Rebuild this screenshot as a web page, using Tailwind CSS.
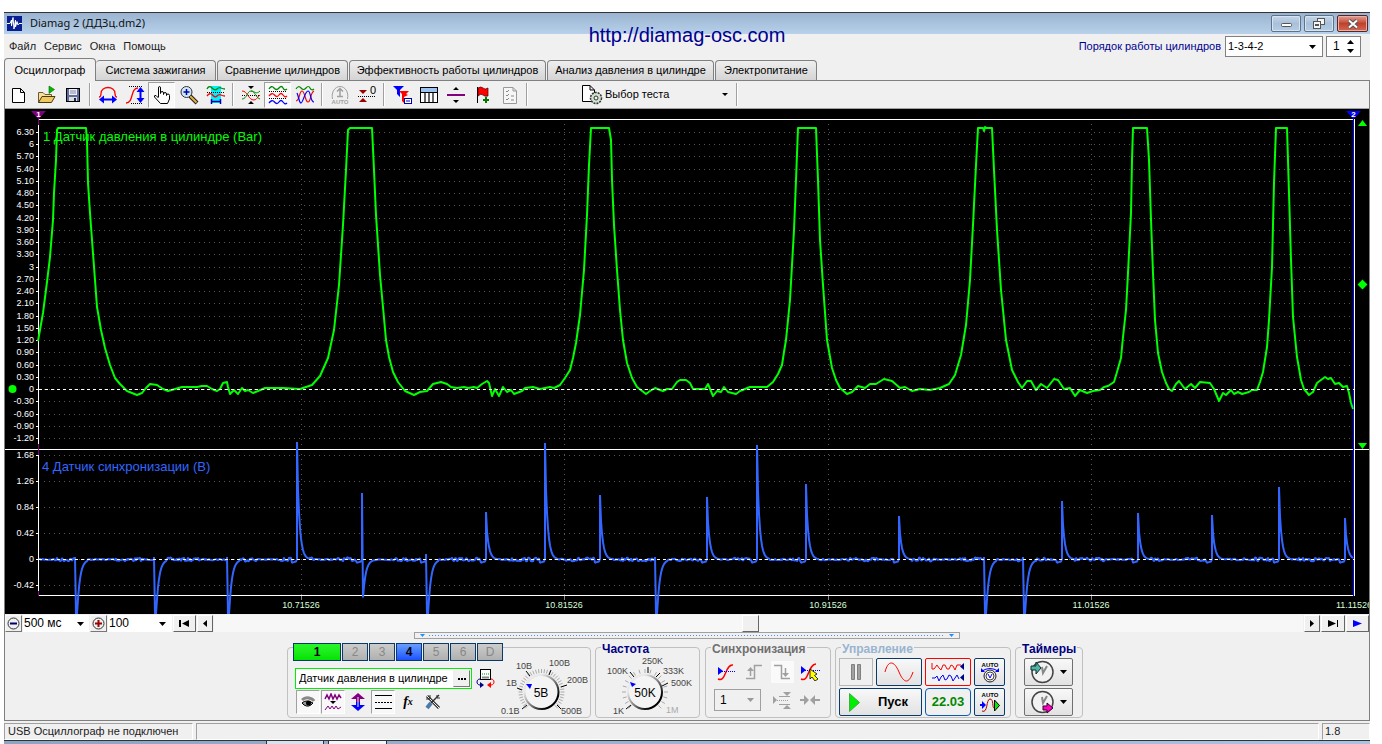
<!DOCTYPE html>
<html lang="ru">
<head>
<meta charset="utf-8">
<title>Diamag 2</title>
<script src="https://cdn.jsdelivr.net/npm/@tailwindcss/browser@4"></script>
</head>
<body class="bg-white font-['Liberation_Sans',Arial,sans-serif] text-xs text-black">
<svg width="0" height="0" class="absolute" aria-hidden="true">
  <defs>
    <linearGradient id="ring" x1="0" y1="0" x2="1" y2="1"><stop offset=".25" stop-color="#e8e8e8"/><stop offset=".55" stop-color="#777"/><stop offset=".8" stop-color="#000"/></linearGradient>
  </defs>
</svg>
<div class="pt-3 pl-1 pr-3">
<main class="relative border-t border-[#333] bg-[#f0f0f0]">
  <!-- title bar -->
  <header class="flex h-[21px] items-center bg-gradient-to-b from-[#99b4d1] to-[#b9d1ea] pl-[3px] pr-[2px]">
    <svg width="15" height="15" viewBox="0 0 15 15"><rect width="15" height="15" fill="#0a1f8f"/><path d="M0 7.500H3L4.500 4V10L6 1.500L7 13L8.500 4V11L10 5.500L11 9L12 7.500H15" fill="none" stroke="#fff"/></svg>
    <h1 class="ml-2 grow text-[11px] font-['Noto_Sans',sans-serif] text-[#111]">Diamag 2 (ДДЗц.dm2)</h1>
    <div class="flex gap-[3px]">
      <button aria-label="Свернуть" class="flex h-[17px] w-[30px] items-center justify-center rounded-xs border border-[#5e7288] bg-gradient-to-b from-[#c5d6ea] via-[#a9c0da] to-[#b5cce4] shadow-[inset_0_0_0_1px_#d5e3f2]"><svg width="11" height="9"><rect x=".5" y="4.500" width="10" height="3" rx="1" fill="#fff" stroke="#555"/></svg></button>
      <button aria-label="Восстановить" class="flex h-[17px] w-[30px] items-center justify-center rounded-xs border border-[#5e7288] bg-gradient-to-b from-[#c5d6ea] via-[#a9c0da] to-[#b5cce4] shadow-[inset_0_0_0_1px_#d5e3f2]"><svg width="12" height="11" fill="#f5f5f5" stroke="#555"><rect x="4.500" y=".5" width="7" height="6"/><rect x=".5" y="3.500" width="7" height="7"/><rect x="2.500" y="6.500" width="3" height="1"/></svg></button>
      <button aria-label="Закрыть" class="flex h-[17px] w-[31px] items-center justify-center rounded-xs border border-[#5c2420] bg-gradient-to-b from-[#e0a094] via-[#c0402c] to-[#cf6a54] shadow-[inset_0_0_0_1px_#e8b0a6]"><svg width="12" height="10"><path d="M2 1.500L10 8.500M10 1.500L2 8.500" stroke="#555" stroke-width="4"/><path d="M2 1.500L10 8.500M10 1.500L2 8.500" stroke="#fff" stroke-width="2"/></svg></button>
    </div>
  </header>
  <a href="http://diamag-osc.com" class="absolute left-1/2 top-[10px] -translate-x-1/2 text-xl leading-6 text-[#000090]">http://diamag-osc.com</a>
  <!-- menu -->
  <div class="flex h-[24px] items-center pl-[5px] pr-[9px]">
    <nav class="flex grow gap-2 text-[11px] text-[#222]">
      <button>Файл</button><button>Сервис</button><button>Окна</button><button>Помощь</button>
    </nav>
    <label for="order" class="mr-1 text-[11px] text-[#000090]">Порядок работы цилиндров</label>
    <div class="relative mr-[3px] h-[21px] w-[98px] border border-[#808080] bg-white">
      <select id="order" class="h-full w-full appearance-none pl-[2px] text-[11px] outline-none"><option>1-3-4-2</option></select>
      <svg class="pointer-events-none absolute right-[6px] top-2" width="7" height="4"><path d="M0 0H7L3.500 4Z"/></svg>
    </div>
    <div class="flex h-[21px] w-[35px] items-center border border-[#808080] bg-white pl-[6px] pr-[6px]">
      <input aria-label="Цилиндр" value="1" class="w-2 grow text-left text-xs outline-none">
      <svg width="7" height="13"><path d="M0 4H7L3.500 0ZM0 9H7L3.500 13Z"/></svg>
    </div>
  </div>
  <!-- tabs -->
  <div role="tablist" class="flex h-[22px] items-end text-[11px]">
    <button role="tab" aria-selected="true" class="relative z-10 -mb-px h-[23px] w-[92px] rounded-t border border-b-0 border-[#808080] bg-[#f0f0f0]">Осциллограф</button>
    <button role="tab" class="h-[20px] w-[120px] rounded-t border border-b-0 border-l-0 border-[#808080] bg-gradient-to-b from-[#efefef] to-[#d4d4d4]">Система зажигания</button>
    <button role="tab" class="ml-px h-[20px] w-[131px] rounded-t border border-b-0 border-[#808080] bg-gradient-to-b from-[#efefef] to-[#d4d4d4]">Сравнение цилиндров</button>
    <button role="tab" class="ml-px h-[20px] w-[197px] rounded-t border border-b-0 border-[#808080] bg-gradient-to-b from-[#efefef] to-[#d4d4d4]">Эффективность работы цилиндров</button>
    <button role="tab" class="ml-px h-[20px] w-[167px] rounded-t border border-b-0 border-[#808080] bg-gradient-to-b from-[#efefef] to-[#d4d4d4]">Анализ давления в цилиндре</button>
    <button role="tab" class="ml-px h-[20px] w-[102px] rounded-t border border-b-0 border-[#808080] bg-gradient-to-b from-[#efefef] to-[#d4d4d4]">Электропитание</button>
  </div>
  <section class="border border-[#808080]">
    <!-- toolbar -->
    <div class="flex h-[28px] items-center border-b border-[#a0a0a0] shadow-[0_1px_0_#fff]">
      <button aria-label="Новый" class="flex h-[26px] w-[27px] items-center justify-center"><svg width="20" height="20"><path d="M3.500 3.500H11.500L15.500 7.500V17.500H3.500ZM11.500 3.500V7.500H15.500" fill="#fff" stroke="#000"/></svg></button>
      <button aria-label="Открыть" class="flex h-[26px] w-[27px] items-center justify-center"><svg width="20" height="20"><path d="M2.500 17.500V7.500H7L9 9.500H15.500V11" fill="#f5dfa0" stroke="#6b5a2a"/><path d="M2.500 17.500L6 11.500H19L15.500 17.500Z" fill="#f0c860" stroke="#4a3a10"/><path d="M13 1V8.500L18.500 4.500Z" fill="#0b0" stroke="#060" stroke-width=".6"/></svg></button>
      <button aria-label="Сохранить" class="flex h-[26px] w-[27px] items-center justify-center"><svg width="20" height="20"><rect x="3.500" y="3.500" width="13" height="13" fill="#5e6f9e" stroke="#000"/><rect x="6" y="4" width="8" height="6" fill="#eef"/><path d="M7 6H13M7 8H13" stroke="#889"/><rect x="6" y="12" width="8" height="4" fill="#ddd"/><rect x="11" y="13" width="2" height="3" fill="#224"/></svg></button>
      <span class="mx-[3px] h-[23px] w-[2px] border-l border-[#a0a0a0] bg-white"></span>
      <button aria-label="По ширине" class="flex h-[26px] w-[27px] items-center justify-center"><svg width="20" height="20"><path d="M1 12C1 12 3 12 3 8.500C3 4.500 6.500 2.500 10 2.500S17 4.500 17 8.500C17 12 19 12 19 12" fill="none" stroke="#f00" stroke-width="1.300"/><path d="M4 14.500H16" stroke="#00f" stroke-width="2"/><path d="M1 14.500L6 10.500V18.500ZM19 14.500L14 10.500V18.500Z" fill="#00f"/></svg></button>
      <button aria-label="По высоте" class="flex h-[26px] w-[27px] items-center justify-center"><svg width="20" height="20"><path d="M4 1.500H18M6 18.500H18" stroke="#000" stroke-dasharray="1 1"/><path d="M1 18C9 18 5 3 13 3" fill="none" stroke="#f00" stroke-width="1.300"/><path d="M15.500 5V15" stroke="#00f" stroke-width="2"/><path d="M15.500 2L11.500 7H19.500ZM15.500 18L11.500 13H19.500Z" fill="#00f"/></svg></button>
      <button aria-label="Рука" aria-pressed="true" class="flex h-[26px] w-[27px] items-center justify-center border border-[#a0a0a0] border-b-white border-r-white bg-[#f9f9f9]"><svg width="20" height="20"><path d="M6.500 12V3Q6.500 1.500 7.500 1.500T8.500 3V8.500Q8.500 6.500 10 6.500T11.500 8V9.500Q11.500 7.500 13 7.500T14.500 9V10.500Q14.500 9 16 9T17.500 10.500V14L15.500 18.500H8.500L2.500 12Q2 10 4 10.500L6.500 13" fill="#fff" stroke="#000"/></svg></button>
      <button aria-label="Лупа" class="flex h-[26px] w-[27px] items-center justify-center"><svg width="20" height="20"><path d="M11 11L18 18" stroke="#222" stroke-width="4"/><path d="M11 11L17.500 17.500" stroke="#e8b040" stroke-width="2"/><circle cx="7.500" cy="7" r="5.500" fill="#cfe6f5" stroke="#333"/><path d="M4.500 7H10.500M7.500 4V10" stroke="#00a" stroke-width="1.500"/></svg></button>
      <button aria-label="Выделение" class="flex h-[26px] w-[27px] items-center justify-center"><svg width="20" height="20"><rect x="5" y="1" width="10" height="17" fill="#00f0ff"/><path d="M1 4Q3 0 6 3T11 4T15 3T19 4" fill="none" stroke="#080" stroke-width="1.300"/><path d="M1 7.500H19" stroke="#000" stroke-dasharray="1 1"/><path d="M1 11Q4 7 6.500 10T11 11T15 10T19 11" fill="none" stroke="#f00" stroke-width="1.300"/><path d="M5.500 14V19M14.500 14V19M6 16.500H14" stroke="#00a" stroke-width="1.500"/></svg></button>
      <span class="mx-[3px] h-[23px] w-[2px] border-l border-[#a0a0a0] bg-white"></span>
      <button aria-label="Наложить" class="flex h-[26px] w-[27px] items-center justify-center"><svg width="20" height="20"><path d="M1 10.500H19" stroke="#000" stroke-dasharray="1 1"/><path d="M1 6C7 6 7 15 13 15C16 15 16 12 19 10" fill="none" stroke="#f00"/><path d="M1 14C6 14 6 6 10 6S15 13 19 14M10 6C14 6 15 10 19 6" fill="none" stroke="#080"/><path d="M7 1H13L10 4ZM7 19H13L10 16Z"/></svg></button>
      <button aria-label="Разнести" aria-pressed="true" class="flex h-[26px] w-[27px] items-center justify-center border border-[#a0a0a0] border-b-white border-r-white bg-[#f9f9f9]"><svg width="20" height="20"><path d="M1 4Q3.500 0 6 3T11 3T15 3T19 4" fill="none" stroke="#080" stroke-width="1.300"/><path d="M1 6.500H19M1 13.500H19" stroke="#000" stroke-dasharray="1 1"/><path d="M1 11Q4 7 6.500 10T11 10T15 10T19 11" fill="none" stroke="#f00" stroke-width="1.300"/><path d="M1 18Q4 14 6.500 17T11 17T15 17T19 18" fill="none" stroke="#00f" stroke-width="1.300"/></svg></button>
      <button aria-label="Смешать" class="flex h-[26px] w-[27px] items-center justify-center"><svg width="20" height="20" fill="none" stroke-width="1.200"><path d="M1 4Q3.500 0 6 3T11 3T15 3T19 4" stroke="#080"/><path d="M1 16C5 16 4 6 7 6S10 17 13 17S15 8 19 6" stroke="#f00"/><path d="M2 8C4 12 4 18 6 18S10 6 13 6S15 17 19 17" stroke="#00f"/></svg></button>
      <span class="mx-[3px] h-[23px] w-[2px] border-l border-[#a0a0a0] bg-white"></span>
      <button aria-label="Авто" class="flex h-[26px] w-[27px] items-center justify-center"><svg width="20" height="20"><path d="M2.500 14C1 7 5 1.500 10 1.500S19 7 17.500 14" fill="none" stroke="#a0a0a0"/><path d="M10 4V12M7 6.500L10 3.500L13 6.500M7 11.500H13" stroke="#a0a0a0" fill="none" stroke-width="1.500"/><text x="10" y="19" text-anchor="middle" font-size="6" font-weight="bold" fill="#a0a0a0">AUTO</text></svg></button>
      <button aria-label="Ноль" class="flex h-[26px] w-[27px] items-center justify-center"><svg width="22" height="20"><path d="M3 5H11L7 9ZM3 17H11L7 13Z" fill="#900"/><path d="M2 11.500H20" stroke="#000" stroke-dasharray="1 1"/><text x="14" y="9" font-size="11">0</text></svg></button>
      <span class="mx-[3px] h-[23px] w-[2px] border-l border-[#a0a0a0] bg-white"></span>
      <button aria-label="Фильтр" class="flex h-[26px] w-[27px] items-center justify-center"><svg width="20" height="20"><path d="M1 1H12L8 5V12L5 9V5Z" fill="#00f"/><path d="M7 6H17L14 9L16 10L12 12V18L10 16V9Z" fill="#f00"/><rect x="12.500" y="13.500" width="7" height="5" fill="#fff" stroke="#00a"/><path d="M14 16H18" stroke="#00a"/></svg></button>
      <button aria-label="Таблица" class="flex h-[26px] w-[27px] items-center justify-center"><svg width="20" height="20"><rect x="1.500" y="2.500" width="17" height="15" fill="#fff" stroke="#000"/><rect x="2" y="3" width="16" height="4" fill="#9cc4ee"/><path d="M2 7.500H18M6 7V17M10 7V17M14 7V17" stroke="#000" stroke-width="1.200"/></svg></button>
      <button aria-label="Разделитель" class="flex h-[26px] w-[27px] items-center justify-center"><svg width="20" height="20"><path d="M7 5H13L10 2ZM7 15H13L10 18Z"/><rect x="1" y="9" width="18" height="2" fill="#800080"/></svg></button>
      <button aria-label="Метка" class="flex h-[26px] w-[27px] items-center justify-center"><svg width="20" height="20"><path d="M4.500 2V18" stroke="#000"/><path d="M5 3Q8 1 10 3T15 3V11Q12 12 10 10T5 11Z" fill="#f00" stroke="#400" stroke-width=".7"/><path d="M13 12V18M10 15H16" stroke="#070" stroke-width="2"/></svg></button>
      <button aria-label="Отчёт" class="flex h-[26px] w-[27px] items-center justify-center"><svg width="20" height="20"><path d="M3.500 2.500H13L16.500 6V18.500H3.500ZM13 2.500V6H16.500" fill="#f6f6f6" stroke="#999"/><path d="M6 6L7 7L9 5M6 10L7 11L9 9M6 14L7 15L9 13M11 11H14M11 15H14" fill="none" stroke="#888"/></svg></button>
      <span class="mx-[3px] h-[23px] w-[2px] border-l border-[#a0a0a0] bg-white"></span>
      <button class="ml-[50px] flex h-[26px] w-[152px] items-center text-left text-[11px]"><svg width="22" height="22"><path d="M1.500 1.500H9L13.500 6V17.500H1.500ZM9 1.500V6H13.500" fill="#fff" stroke="#000"/><circle cx="15" cy="14" r="5.500" fill="#cfe3cf" stroke="#333" stroke-width="1.500" stroke-dasharray="2 1"/><circle cx="15" cy="14" r="2" fill="#f0f0f0" stroke="#333"/></svg><span class="ml-[2px] grow">Выбор теста</span><svg class="mr-[5px]" width="6" height="3"><path d="M0 0H6L3 3Z"/></svg></button>
      <span class="mx-[3px] h-[23px] w-[2px] border-l border-[#a0a0a0] bg-white"></span>
    </div>
    <!-- oscillogram -->
    <div class="bg-black">
      <svg id="scope" class="block h-auto w-full" viewBox="5 109 1364 505" role="img" aria-label="Осциллограмма" font-size="9" fill="#fff">
        <rect x="5" y="109" width="1364" height="505" fill="#000"/>
        <g id="grid" stroke="#555" shape-rendering="crispEdges"></g>
        <g id="labels" text-anchor="end"></g>
        <g shape-rendering="crispEdges">
          <rect x="38" y="119" width="1315" height="1"/><rect x="38" y="119" width="1" height="477"/><rect x="5" y="449" width="1364" height="1"/><rect x="38" y="595" width="1316" height="1"/><rect x="1354" y="119" width="1" height="477"/>
          <rect x="1353" y="114" width="1" height="482" fill="#00f"/>
          <rect x="38" y="114" width="1" height="11" fill="#800080"/><rect x="38" y="444" width="1" height="11" fill="#800080"/><rect x="38" y="591" width="1" height="5" fill="#800080"/>
        </g>
        <path d="M31 111H46L38.500 119Z" fill="#800080"/><path d="M1346 111H1361L1353.500 119Z" fill="#00f"/>
        <text x="38.500" y="117" text-anchor="middle" font-size="8" font-weight="bold">1</text><text x="1353.500" y="117" text-anchor="middle" font-size="8" font-weight="bold">2</text>
        <path d="M1358 126H1367L1362.500 120ZM1362.500 279.500L1367.500 284.500L1362.500 289.500L1357.500 284.500ZM1358 443H1367L1362.500 449Z" fill="#0f0"/>
        <circle cx="12.500" cy="389" r="4" fill="#0f0"/>
        <path id="blue" fill="none" stroke="#36f" stroke-width="2" stroke-linejoin="bevel"/>
        <path fill="none" stroke="#0f0" stroke-width="2" stroke-linejoin="round" d="M38 341L43 313L47 282L50 257L53 220L54 193L56 160L57 130L58 128H86L87 140L88 183L90 213L92 240L95 280L97 307L101 330L105 348L110 365L115 378L120 384L127 391L132 393L137 395L142 393L146 388L150 384L157 385L163 389L168 391L175 389L182 387H197L202 386H207L212 389L217 391L220 389L223 383L227 382L228 387L230 394L234 390L238 394L242 388L245 391L248 390L253 393L258 391L265 388L283 388L300 389L312 385L320 376L328 358L334 330L339 285L343 225L346 170L348 130L350 128H372L374 170L376 215L380 275L384 318L386 340L389 357L393 372L398 382L405 391L414 395L420 392L427 391L433 384L441 382L447 384L451 387L457 388L464 387L468 388L474 387L477 388L482 384L487 381L489 383L492 396L495 389L499 396L503 387L507 392L511 390L514 394L522 391L525 388L533 387L540 389L550 387L554 388L560 385L565 378L570 370L573 358L576 343L580 315L584 270L587 215L589 165L591 128H609L611 140L612 180L614 225L617 270L620 310L623 340L627 363L632 378L637 387L646 394L650 391L655 388L663 391L667 389H672L677 382L680 380H686L690 383L693 389H705L708 384L713 396L717 391L721 392L724 387L728 392L736 394L740 391L745 389L750 387H767L773 382L778 374L782 365L784 352L786 340L790 300L794 230L796 180L798 128H816L818 180L820 240L823 285L827 340L832 368L836 380L840 388L847 394L852 392L858 386L865 388L870 384L876 384L884 379L892 381L900 388L905 387L912 391L920 389L930 390L940 388L949 384L955 375L961 355L966 325L970 280L973 225L976 165L978 128H983L984 131L985 127L986 128H992L994 170L997 230L1001 290L1006 340L1012 370L1018 382L1022 388L1027 381L1031 381L1036 390L1041 384L1047 388L1054 379L1058 380L1064 389L1070 388L1075 396L1080 390L1087 393L1093 391L1100 390L1104 387L1108 386L1114 382L1117 372L1121 358L1123 337L1126 310L1128 273L1131 213L1132 160L1133 128H1147L1149 160L1151 220L1153 273L1155 320L1158 353L1162 372L1166 383L1169 389L1172 391L1176 384L1179 381L1185 389L1191 384L1195 388L1200 382L1210 383L1214 389L1219 401L1223 393L1226 395L1231 390L1234 394L1238 392L1242 394L1249 392L1252 390H1257L1260 382L1263 372L1267 347L1269 320L1272 267L1274 183L1276 128H1287L1289 193L1291 260L1293 317L1297 357L1301 380L1304 389L1309 395L1313 392L1317 383L1325 377L1328 379L1331 378L1335 384L1339 383L1343 387L1347 386L1349 393L1351 403L1353 409"/>
        <g stroke="#fff" stroke-dasharray="3 3" shape-rendering="crispEdges"><path d="M39 389.500H1354M39 559.500H1354"/></g>
        <text x="43" y="141" font-size="13" fill="#0f0">1 Датчик давления в цилиндре (Bar)</text>
        <text x="42" y="471" font-size="13" fill="#36f">4 Датчик синхронизации (В)</text>
        <g text-anchor="middle" fill="#d8ffd8"><text x="301" y="608">10.71526</text><text x="564" y="608">10.81526</text><text x="828" y="608">10.91526</text><text x="1091" y="608">11.01526</text><text x="1354" y="608">11.11526</text></g>
      </svg>
    </div>
    <!-- time scale and scroll bar -->
    <div class="flex h-[18px] items-center gap-px text-[11px]">
      <button aria-label="Уменьшить" class="flex h-[17px] w-[17px] items-center justify-center border border-[#f8f8f8] border-b-[#777] border-r-[#777]"><svg width="13" height="13"><circle cx="6.500" cy="6.500" r="5.500" fill="#f0f0f0" stroke="#333"/><path d="M3 6.500H10" stroke="#006" stroke-width="2"/></svg></button>
      <div class="relative h-[17px] w-[66px] bg-white"><select aria-label="Развёртка" class="h-full w-full appearance-none pl-px text-xs leading-4"><option>500 мс</option></select><svg class="pointer-events-none absolute right-[5px] top-[7px]" width="7" height="4"><path d="M0 0H7L3.500 4Z"/></svg></div>
      <button aria-label="Увеличить" class="flex h-[17px] w-[17px] items-center justify-center border border-[#f8f8f8] border-b-[#777] border-r-[#777]"><svg width="13" height="13"><circle cx="6.500" cy="6.500" r="5.500" fill="#f0f0f0" stroke="#333"/><path d="M3 6.500H10M6.500 3V10" stroke="#900" stroke-width="2"/></svg></button>
      <div class="relative h-[17px] w-[64px] bg-white"><select aria-label="Масштаб" class="h-full w-full appearance-none pl-px text-xs leading-4"><option>100</option></select><svg class="pointer-events-none absolute right-[6px] top-[7px]" width="7" height="4"><path d="M0 0H7L3.500 4Z"/></svg></div>
      <button aria-label="В начало" class="flex h-[17px] w-[23px] items-center justify-center border border-white border-b-[#666] border-r-[#666]"><svg width="11" height="7"><path d="M0 0H2V7H0ZM10 0V7L3 3.500Z"/></svg></button>
      <button aria-label="Назад" class="flex h-[17px] w-[16px] items-center justify-center border border-white border-b-[#666] border-r-[#666]"><svg width="4" height="7"><path d="M4 0V7L0 3.500Z"/></svg></button>
      <input type="range" aria-label="Прокрутка" min="0" max="1000" value="493" class="h-[17px] min-w-0 grow appearance-none bg-[#f7f7f7] [&::-webkit-slider-thumb]:h-[17px] [&::-webkit-slider-thumb]:w-[17px] [&::-webkit-slider-thumb]:appearance-none [&::-webkit-slider-thumb]:border [&::-webkit-slider-thumb]:border-white [&::-webkit-slider-thumb]:border-r-[#666] [&::-webkit-slider-thumb]:border-b-[#666] [&::-webkit-slider-thumb]:bg-[#f0f0f0]">
      <button aria-label="Вперёд" class="flex h-[17px] w-[16px] items-center justify-center border border-white border-b-[#666] border-r-[#666]"><svg width="4" height="7"><path d="M0 0V7L4 3.500Z"/></svg></button>
      <button aria-label="В конец" class="flex h-[17px] w-[24px] items-center justify-center border border-white border-b-[#666] border-r-[#666]"><svg width="11" height="7"><path d="M9 0H10V7H9ZM0 0V7L8 3.500Z"/></svg></button>
      <button aria-label="Воспроизвести" class="flex h-[17px] w-[23px] items-center justify-center border border-white border-b-[#666] border-r-[#666]"><svg width="9" height="7"><path d="M0 0V7L9 3.500Z" fill="#00f"/></svg></button>
    </div>
    <!-- splitter -->
    <button aria-label="Свернуть панель" class="mx-auto flex h-[7px] w-2/5 items-center gap-1 border border-[#a0a0a0] px-[5px]"><svg width="5" height="3"><path d="M0 0H5L2.500 3Z" fill="#1e90ff"/></svg><span class="h-px grow bg-[repeating-linear-gradient(90deg,#4a90e8_0_1px,transparent_1px_3px)]"></span><svg width="5" height="3"><path d="M0 0H5L2.500 3Z" fill="#1e90ff"/></svg></button>
    <!-- control panels -->
    <div class="flex h-[81px] justify-center gap-1 pr-1 pt-1">
      <div role="group" aria-label="Каналы" class="relative flex h-[75px] w-[304px]">
        <div class="pointer-events-none absolute inset-x-0 bottom-0 top-[4px] rounded border border-[#c0c0c0]"></div>
        <div class="relative flex flex-col pl-[6px]">
          <div class="flex gap-px bg-[#f0f0f0] text-center text-xs text-[#888]">
            <button class="h-[18px] w-[48px] border border-[#0a3a6a] bg-gradient-to-b from-[#2af52a] to-[#00e400] font-bold text-black">1</button>
            <button class="h-[18px] w-[26px] border border-[#0a3a6a] bg-gradient-to-b from-[#ccc] to-[#b0b0b0]">2</button>
            <button class="h-[18px] w-[26px] border border-[#0a3a6a] bg-gradient-to-b from-[#ccc] to-[#b0b0b0]">3</button>
            <button class="h-[18px] w-[26px] border border-[#0a3a6a] bg-gradient-to-b from-[#6a9cff] to-[#1f50ff] font-bold text-black">4</button>
            <button class="h-[18px] w-[26px] border border-[#0a3a6a] bg-gradient-to-b from-[#ccc] to-[#b0b0b0]">5</button>
            <button class="h-[18px] w-[26px] border border-[#0a3a6a] bg-gradient-to-b from-[#ccc] to-[#b0b0b0]">6</button>
            <button class="h-[18px] w-[26px] border border-[#0a3a6a] bg-gradient-to-b from-[#ccc] to-[#b0b0b0]">D</button>
          </div>
          <div class="mt-[7px] flex items-center pl-[2px]">
            <div class="flex h-[21px] w-[177px] items-center border border-[#0e0] bg-white">
              <input aria-label="Датчик" value="Датчик давления в цилиндре" class="min-w-0 grow pl-[3px] text-[11px] outline-none">
              <button aria-label="Выбрать датчик" class="mr-px flex h-[17px] w-[17px] items-center justify-center border border-[#eee] border-b-[#777] border-r-[#777] bg-[#f0f0f0]"><svg width="8" height="2"><path d="M0 0H2V2H0ZM3 0H5V2H3ZM6 0H8V2H6Z"/></svg></button>
            </div>
            <button aria-label="Поменять" class="ml-1"><svg width="19" height="19"><rect x="4.500" y=".5" width="10" height="10" fill="#fff" stroke="#000"/><path d="M6 5H13" stroke="#080" stroke-dasharray="1 1"/><path d="M6 8.500H13" stroke="#888" stroke-width="2"/><path d="M4 10C0 10 0 16 4 16" fill="none" stroke="#008"/><path d="M4 13V19L8 16Z" fill="#008"/><path d="M15 10C19 10 19 16 15 16" fill="none" stroke="#f00"/><path d="M15 13V19L11 16Z" fill="#f00"/></svg></button>
          </div>
          <div class="mt-px flex gap-px pl-[3px]">
            <button aria-label="Показать" aria-pressed="true" class="flex h-[24px] w-[24px] items-center justify-center border border-[#a0a0a0] border-b-white border-r-white bg-[#f8f8f8]"><svg width="14" height="12"><path d="M1 4Q4 1 8 2T13 5" fill="none" stroke="#888" stroke-width="3"/><path d="M1 7Q5 3 12 7Q8 12 3 9Z" fill="#999" stroke="#000"/><circle cx="7.500" cy="7" r="2.500"/></svg></button>
            <button aria-label="Инверсия" aria-pressed="true" class="flex h-[24px] w-[24px] items-center justify-center border border-[#a0a0a0] border-b-white border-r-white bg-[#f8f8f8]"><svg width="18" height="18" fill="none" stroke="#800080"><path d="M1 6L3 2L5 6L7 1L9 6L11 2L13 6L15 2L17 5" stroke-width="1.500"/><path d="M1 17L4 13L6 16L8 13L10 16L12 13L14 16L17 14" /><path d="M6 8H12L9 11Z" fill="#000" stroke="none"/></svg></button>
            <button aria-label="Сдвиг" class="flex h-[24px] w-[24px] items-center justify-center"><svg width="16" height="18"><path d="M8 0L15 6H10V9H6V6H1Z" fill="#800080"/><path d="M8 18L15 12H10V9H6V12H1Z" fill="#00f"/><path d="M8 4V14" stroke="#f0f0f0"/></svg></button>
            <button aria-label="Линии" aria-pressed="true" class="flex h-[24px] w-[24px] items-center justify-center border border-[#a0a0a0] border-b-white border-r-white bg-[#f8f8f8]"><svg width="17" height="14" stroke="#000"><path d="M0 .5H17M0 13.500H17"/><path d="M0 7.500H17" stroke-dasharray="2 1"/></svg></button>
            <button aria-label="Функция" class="flex h-[24px] w-[24px] items-center justify-center font-['Liberation_Serif',serif] text-sm font-bold italic">f<span class="text-[10px]">x</span></button>
            <button aria-label="Настройка" class="flex h-[24px] w-[24px] items-center justify-center"><svg width="16" height="16"><path d="M2 2L14 14" stroke="#333" stroke-width="3"/><path d="M2 2L14 14" stroke="#eee"/><path d="M14 1L6 9" stroke="#333" stroke-width="1.500"/><path d="M6 9L2 14" stroke="#4a7aaa" stroke-width="4"/><path d="M1 5L5 5L5 1M12 1V4H15" fill="none" stroke="#333"/></svg></button>
          </div>
        </div>
        <svg class="absolute bottom-0 right-0" width="92" height="65" viewBox="499 653 92 65" font-size="9" fill="#444">
          <g class="ticks" data-cx="541.5" data-cy="692" data-n="36"></g>
          <circle cx="541.500" cy="692" r="17" fill="#f4f4f4" stroke="url(#ring)" stroke-width="2"/>
          <path d="M526 684H532L530 689Z" fill="#00f"/>
          <path d="M517 688L522 690M526 671L530 676M551 670L549 675M567 685L561 687M522 709L527 705M557 705L561 709" stroke="#000"/>
          <text x="516" y="669">10В</text><text x="549" y="666">100В</text><text x="567" y="683">200В</text><text x="561" y="714">500В</text><text x="501" y="714">0.1В</text><text x="506" y="686">1В</text>
          <text x="541" y="697" font-size="12" text-anchor="middle" fill="#000">5В</text>
        </svg>
      </div>
      <div role="group" aria-label="Частота" class="relative h-[75px] w-[105px]">
        <div class="pointer-events-none absolute inset-x-0 bottom-0 top-[4px] rounded border border-[#c0c0c0]"></div>
        <h2 class="absolute left-[6px] top-0 bg-[#f0f0f0] px-px text-xs leading-[13px] font-bold text-[#000080]">Частота</h2>
        <svg class="absolute inset-x-0 bottom-0" width="105" height="65" viewBox="595 653 105 65" font-size="9" fill="#444">
          <g class="ticks" data-cx="645" data-cy="692" data-n="18"></g>
          <circle cx="645" cy="692" r="17" fill="#f4f4f4" stroke="url(#ring)" stroke-width="2"/>
          <path d="M630 682L636 684L632 687Z" fill="#00f"/>
          <path d="M630 672L634 677M648 667V673M660 673L656 677M668 683L662 686M626 709L631 705" stroke="#000"/>
          <text x="607" y="674">100K</text><text x="642" y="664">250K</text><text x="663" y="674">333K</text><text x="671" y="686">500K</text><text x="613" y="714">1K</text><text x="666" y="713" fill="#aaa">1M</text>
          <text x="645" y="697" font-size="12" text-anchor="middle" fill="#000">50K</text>
        </svg>
      </div>
      <div role="group" aria-label="Синхронизация" class="relative ml-px h-[75px] w-[126px] px-[9px] pt-[17px]">
        <div class="pointer-events-none absolute inset-x-0 bottom-0 top-[4px] rounded border border-[#c0c0c0]"></div>
        <h2 class="absolute left-[6px] top-0 bg-[#f0f0f0] px-px text-xs leading-[13px] font-bold text-[#707070]">Синхронизация</h2>
        <div class="flex h-[23px] items-center gap-[5px]">
          <button aria-label="Уровень" class="flex w-6 justify-center"><svg width="18" height="18"><path d="M1 16C9 20 8 1 16 2" fill="none" stroke="#f00" stroke-width="1.500"/><path d="M1 4V12L6 8Z" fill="#00f"/><path d="M5 8.500H18" stroke="#00f" stroke-dasharray="1 1"/></svg></button>
          <button aria-label="Фронт" class="flex w-6 justify-center"><svg width="18" height="16" fill="none" stroke="#a0a0a0" stroke-width="1.500"><path d="M1 14.500H9.500V1.500H17M5.500 12V5"/><path d="M2 7L5.500 3L9 7Z" fill="#a0a0a0" stroke="none"/></svg></button>
          <button aria-label="Спад" class="flex h-[22px] w-6 items-center justify-center bg-[#fafafa]"><svg width="18" height="16" fill="none" stroke="#a0a0a0" stroke-width="1.500"><path d="M1 1.500H8.500V14.500H17M12.500 4V11"/><path d="M9 9L12.500 13L16 9Z" fill="#a0a0a0" stroke="none"/></svg></button>
          <button aria-label="Захват" class="flex w-6 justify-center"><svg width="20" height="18"><path d="M1 16C9 20 8 1 16 1" fill="none" stroke="#f00" stroke-width="1.500"/><path d="M1 3V11L6 7Z" fill="#00f"/><path d="M5 7.500H20" stroke="#00f" stroke-dasharray="1 1"/><path d="M10 6L17 11L14.500 12.500L18 16L15 18L12 14L10 16Z" fill="#ff0" stroke="#000" stroke-width=".8"/></svg></button>
        </div>
        <div class="mt-[6px] flex h-[22px] items-center">
          <div class="relative h-[22px] w-[47px] border border-[#a0a0a0]"><select aria-label="Канал" class="h-full w-full appearance-none pl-[5px] text-xs"><option>1</option></select><svg class="pointer-events-none absolute right-[6px] top-2" width="7" height="4"><path d="M0 0H7L3.500 4Z" fill="#999"/></svg></div>
          <svg class="ml-3" width="18" height="17" fill="#a0a0a0" stroke="#a0a0a0"><path d="M0 4V12L4 8ZM10 0H18L14 4ZM10 17H18L14 13Z" stroke="none"/><path d="M4 8.500H15" stroke-dasharray="1 1"/><path d="M6 4.500H17M6 12.500H17"/></svg>
          <svg class="ml-[9px]" width="20" height="10" fill="#a0a0a0"><path d="M0 4H4V0L9 5L4 10V6H0ZM20 4H15V0L10 5L15 10V6H20Z"/></svg>
        </div>
      </div>
      <div role="group" aria-label="Управление" class="relative h-[75px] w-[176px] pl-[4px] pt-[15px]">
        <div class="pointer-events-none absolute inset-x-0 bottom-0 top-[4px] rounded border border-[#c0c0c0]"></div>
        <h2 class="absolute left-[6px] top-0 bg-[#f0f0f0] px-px text-xs leading-[13px] font-bold text-[#99b4d1]">Управление</h2>
        <div class="relative grid grid-cols-[34px_46px_46px_31px] gap-x-[3px] gap-y-[2px]">
          <button aria-label="Пауза" class="flex h-[28px] items-center justify-center border border-[#b8b8b8]"><svg width="12" height="16"><path d="M1.500 .5H4.500V15.500H1.500ZM7.500 .5H10.500V15.500H7.500Z" fill="#a0a0a0" stroke="#808080"/></svg></button>
          <button aria-label="Генератор" class="flex h-[28px] items-center justify-center rounded-xs border border-[#0a3a6a] bg-gradient-to-b from-[#f8f8f8] to-[#e2e2e2]"><svg width="30" height="20"><path d="M1 10C4 -2 10 -2 15 10S25 22 29 10" fill="none" stroke="#f00"/></svg></button>
          <button aria-label="Запись" class="flex h-[28px] items-center justify-center rounded-xs border border-[#f00] bg-[#f2f2f2]"><svg width="34" height="20" fill="none"><path d="M1 1V7L3 7L6 3L8 6L10 8L12 3L14 3L16 7L18 7L20 3L22 4L24 8L26 3L30 3" stroke="#f00"/><path d="M1 16L4 16L6 14L8 19L10 15L12 13L14 18L16 17L18 13L20 14L22 19L24 16L26 13L28 17" stroke="#00f"/><path d="M33 1V8L29 4.500ZM33 12V19L29 15.500Z" fill="#008"/></svg></button>
          <button aria-label="Авто вольты" class="flex h-[28px] items-center justify-center rounded-xs border border-[#0a3a6a] bg-gradient-to-b from-[#f8f8f8] to-[#e2e2e2]"><svg width="20" height="24"><text x="10" y="7" text-anchor="middle" font-size="6" font-weight="bold">AUTO</text><path d="M2 11Q10 6 18 11" fill="none" stroke="#00f"/><path d="M1 8V12H5ZM19 8V12H15Z" fill="#00f"/><circle cx="10" cy="16" r="6" fill="#eee" stroke="#222"/><circle cx="10" cy="16" r="4" fill="#fff" stroke="#444"/><path d="M8 14L10 18L12 14" fill="none" stroke="#00f"/></svg></button>
          <button class="col-span-2 flex h-[28px] items-center rounded-xs border border-[#0a3a6a] bg-gradient-to-b from-[#f8f8f8] to-[#e2e2e2] pl-[9px] text-[13px] font-bold"><svg width="11" height="19"><path d="M.5 .5V18.500L10.500 9.500Z" fill="#0e0" stroke="#4a4"/></svg><span class="ml-[18px]">Пуск</span></button>
          <output class="flex h-[28px] items-center justify-center rounded-sm border border-[#0a5ab0] text-[13px] font-bold text-[#080]">22.03</output>
          <button aria-label="Авто запуск" class="flex h-[28px] items-center justify-center rounded-xs border border-[#0a3a6a] bg-gradient-to-b from-[#f8f8f8] to-[#e2e2e2]"><svg width="20" height="24"><text x="10" y="7" text-anchor="middle" font-size="6" font-weight="bold">AUTO</text><path d="M2 21C8 24 6 9 10 9S12 18 14 18" fill="none" stroke="#a00"/><path d="M0 14H2V11L6 15L2 19V16H0Z" fill="#00f"/><path d="M14.500 10V21L19.500 15.500Z" fill="#0e0" stroke="#000"/></svg></button>
        </div>
      </div>
      <div role="group" aria-label="Таймеры" class="relative h-[75px] w-[68px] pl-[9px] pt-[15px]">
        <div class="pointer-events-none absolute inset-x-0 bottom-0 top-[4px] rounded border border-[#c0c0c0]"></div>
        <h2 class="absolute left-[6px] top-0 bg-[#f0f0f0] px-px text-xs leading-[13px] font-bold text-[#000080]">Таймеры</h2>
        <div class="relative flex flex-col gap-[2px]">
          <button aria-label="Таймер запуска" class="flex h-[28px] w-[49px] items-center rounded-xs border border-[#707070] bg-gradient-to-b from-[#f8f8f8] to-[#e2e2e2] pl-[5px]"><svg width="24" height="24"><circle cx="12.500" cy="12" r="10.500" fill="#f2f2f2" stroke="#444" stroke-width="1.500"/><path d="M12 7L13 13L17 6" fill="none" stroke="#888" stroke-width="2"/><path d="M1 6H6V2L11 8L6 14V10H1Z" fill="#4fb5a5" stroke="#133"/></svg><svg class="ml-[6px]" width="7" height="4"><path d="M0 0H7L3.500 4Z"/></svg></button>
          <button aria-label="Таймер остановки" class="flex h-[28px] w-[49px] items-center rounded-xs border border-[#707070] bg-gradient-to-b from-[#f8f8f8] to-[#e2e2e2] pl-[5px]"><svg width="24" height="24"><circle cx="12.500" cy="12" r="10.500" fill="#f2f2f2" stroke="#444" stroke-width="1.500"/><path d="M12 7L13 13L17 6" fill="none" stroke="#888" stroke-width="2"/><path d="M13 16H17V13L23 18L17 23V20H13Z" fill="#f0b" stroke="#303"/></svg><svg class="ml-[6px]" width="7" height="4"><path d="M0 0H7L3.500 4Z"/></svg></button>
        </div>
      </div>
    </div>
  </section>
  <!-- status bar -->
  <footer class="flex gap-[3px] pt-[2px] text-[11px] leading-[15px] whitespace-nowrap text-[#222]">
    <div class="w-[189px] border border-[#a0a0a0] border-b-white border-r-white pl-[3px]">USB Осциллограф не подключен</div>
    <div class="grow border border-[#a0a0a0] border-b-white border-r-white"></div>
    <div class="w-[48px] border border-[#a0a0a0] border-b-white border-r-white pl-[2px]">1.8</div>
  </footer>
  <div class="flex h-[4px] border-t border-[#333] bg-gradient-to-r from-[#8aa6c4] to-[#a8c4e2] pl-[262px]">
    <span class="w-[58px] border-x border-[#234] bg-[#d5e2ef]"></span><span class="ml-1 w-[59px] border-x border-[#234] bg-[#f2f6fa]"></span>
  </div>
</main>
</div>
<script>
  // grid and axis labels
  var green = ['6.30','6','5.70','5.40','5.10','4.80','4.50','4.20','3.90','3.60','3.30','3','2.70','2.40','2.10','1.80','1.50','1.20','0.90','0.60','0.30','0','-0.30','-0.60','-0.90','-1.20'];
  var grid = '', labels = '';
  function row(y, t) {
    grid += '<path d="M44 ' + (y + .5) + 'H1353" stroke-dasharray="1 4"/><path d="M36 ' + (y + .5) + 'H38" stroke="#fff"/>';
    labels += '<text x="34" y="' + (y + 3) + '">' + t + '</text>';
  }
  green.forEach(function (t, i) { row(Math.round(132 + i * 12.24), t); });
  ['1.68','1.26','0.84','0.42','0','-0.42'].forEach(function (t, i) { row(455 + i * 26, t); });
  [301, 564, 828, 1091].forEach(function (x) {
    grid += '<path d="M' + (x + .5) + ' 124V595" stroke-dasharray="1 4"/><path d="M' + (x + .5) + ' 596V600" stroke="#888"/>';
  });
  document.getElementById('grid').innerHTML = grid;
  document.getElementById('labels').innerHTML = labels;

  // synchronisation signal: [x, top, bottom] of every spike
  var spikes = [[75,557,640],[154,557,640],[227,557,640],[297,442,0],[362,493,597],[426,554,640],[486,512,0],[545,443,0],[600,495,0],[655,557,640],[707,497,0],[757,445,0],[806,484,0],[899,516,0],[984,557,640],[1023,557,640],[1062,501,0],[1138,513,0],[1212,515,0],[1279,487,0],[1345,518,0]];
  var seed = 7, d = 'M39 559', s = 0;
  function rnd() { seed = (seed * 16807) % 2147483647; return seed / 2147483647; }
  for (var x = 40; x < 1354; x++) {
    if (s < spikes.length && x === spikes[s][0]) {
      var p = spikes[s++];
      d += 'L' + x + ' 559L' + x + ' ' + p[1];
      if (p[2]) d += 'L' + (x + 1) + ' ' + Math.min(p[2], 614);
      for (var k = 1; k < 13 && x + k < 1354; k++) {
        var h = p[2] ? -(p[2] - 559) * Math.exp(-(k - 1) / 2.8) : (559 - p[1]) * .6 * Math.exp(-(k - 1) / 2.5);
        d += 'L' + (x + k) + ' ' + Math.min(614, 559.5 - h).toFixed(1);
      }
      x += 12;
    } else {
      var near = s < spikes.length && spikes[s][0] - x < 6 && spikes[s][1] < 556;
      d += 'L' + x + ' ' + (near ? 563 - (6 - spikes[s][0] + x) * .3 : 559.5 + (rnd() - .5) * (Math.sin(x / 9) > -.2 ? 4 : 1.5)).toFixed(1);
    }
  }
  document.getElementById('blue').setAttribute('d', d);

  // knob scales
  document.querySelectorAll('.ticks').forEach(function (g) {
    var cx = +g.dataset.cx, cy = +g.dataset.cy, n = +g.dataset.n, out = '';
    for (var i = 0; i <= n; i++) {
      var a = (135 + 270 * i / n) * Math.PI / 180, c = Math.cos(a), v = Math.sin(a);
      out += 'M' + (cx + 19 * c).toFixed(1) + ' ' + (cy + 19 * v).toFixed(1) + 'L' + (cx + 23 * c).toFixed(1) + ' ' + (cy + 23 * v).toFixed(1);
    }
    g.innerHTML = '<path d="' + out + '" stroke="#aaa"/>';
  });
</script>
</body>
</html>
